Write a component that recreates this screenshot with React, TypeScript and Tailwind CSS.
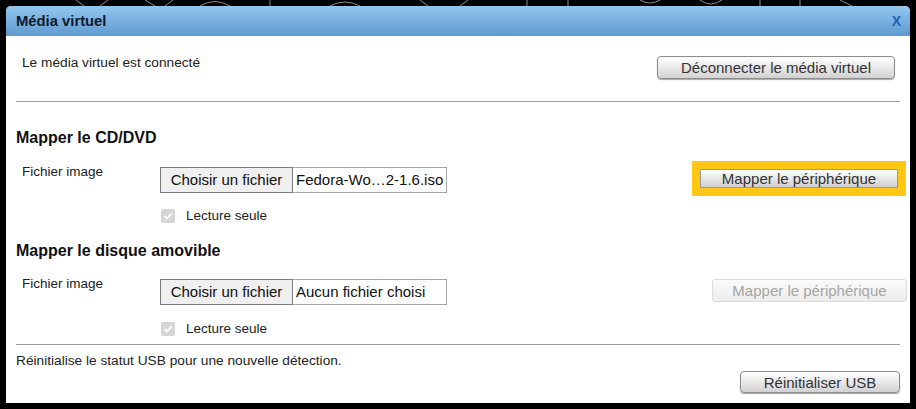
import React from "react";

function Check() {
  return (
    <div className="w-[14px] h-[14px] rounded-[2px] bg-[#d6d6d6] flex items-center justify-center">
      <svg width="10" height="10" viewBox="0 0 10 10">
        <path d="M1.5 5.2 L4 7.6 L8.6 2.4" fill="none" stroke="#ffffff" strokeWidth="1.8" />
      </svg>
    </div>
  );
}

function FileInput({ name }: { name: string }) {
  return (
    <div className="w-[287px] h-[26px] border border-[#a6a6a6] flex items-stretch bg-white">
      <div className="w-[133px] bg-[#efefef] border border-[#7a7a7a] -m-px mr-0 flex items-center justify-center text-[15px] text-[#111]">
        Choisir un fichier
      </div>
      <div className="flex items-center pl-[3px] text-[15px] text-[#111] whitespace-nowrap">{name}</div>
    </div>
  );
}

export default function App() {
  return (
    <div className="w-[916px] h-[409px] bg-black overflow-hidden font-['Liberation_Sans',Arial,sans-serif] text-[#222]">
      <svg width="916" height="6" className="block">
        <g stroke="#8a8a8a" strokeWidth="1" fill="none">
          <path d="M76 0 L84 6" />
          <path d="M100 6 L108 0" />
          <path d="M145 0 L155 6" />
          <path d="M165 6 L173 0" />
          <path d="M200 6 Q215 -3 230 6" />
          <path d="M270 0 L270 6" />
          <path d="M330 6 Q345 -2 360 6" />
          <path d="M420 0 L428 6" />
          <path d="M460 6 L468 0" />
          <path d="M527 0 L527 6" />
          <path d="M568 0 L568 6" />
          <path d="M640 0 Q650 6 660 0" />
          <path d="M700 0 Q710 8 722 0" />
          <path d="M760 0 L760 6" />
          <path d="M800 0 L800 6" />
          <path d="M840 0 L852 6" />
        </g>
      </svg>
      <div className="ml-[6px] w-[904px] h-[397px] rounded-t-[5px] bg-white flex flex-col overflow-hidden">
        <div className="h-[30px] shrink-0 bg-linear-to-b from-[#92c6ee] to-[#5f9ad0] flex items-center justify-between pl-[10px] pr-[9px]">
          <span className="text-[14.8px] font-bold text-[#0d1b2c]">Média virtuel</span>
          <span className="text-[14px] font-bold text-[#1d63b8]">X</span>
        </div>
        <div className="flex-1 pl-[10px] pr-[10px] flex flex-col">
          <div className="flex items-start justify-between pt-[18px]">
            <span className="pl-[6px] text-[13.7px] leading-[17px]">Le média virtuel est connecté</span>
            <button className="mt-[2px] mr-[5px] w-[238px] h-[23px] rounded-[4px] border border-[#8c8c8c] bg-linear-to-b from-white to-[#d2d2d2] shadow-[0_1px_1px_rgba(0,0,0,0.35)] text-[15px] text-[#333]">
              Déconnecter le média virtuel
            </button>
          </div>
          <div className="mt-[22px] h-px bg-[#9c9c9c]" />
          <div className="mt-[26px] text-[16px] leading-[20px] font-bold text-[#111]">Mapper le CD/DVD</div>
          <div className="mt-[19px] flex items-start">
            <span className="w-[144px] pl-[6px] text-[13.5px] leading-[16px] -mt-[3px]">Fichier image</span>
            <FileInput name="Fedora-Wo…2-1.6.iso" />
            <div className="flex-1" />
            <div className="-mt-[6px] -mb-[9px] -mr-[6px] w-[214px] h-[35px] bg-[#fec713] flex items-center justify-center">
              <button className="w-[198px] h-[19px] border border-[#9a9a9a] rounded-[1px] bg-linear-to-b from-white to-[#cfcfcf] text-[15px] leading-[17px] text-[#333]">
                Mapper le périphérique
              </button>
            </div>
          </div>
          <div className="mt-[15px] ml-[145px] flex items-center gap-[11px]">
            <Check />
            <span className="text-[13.5px] leading-[16px]">Lecture seule</span>
          </div>
          <div className="mt-[17px] text-[16px] leading-[20px] font-bold text-[#111]">Mapper le disque amovible</div>
          <div className="mt-[18px] flex items-start">
            <span className="w-[144px] pl-[6px] text-[13.5px] leading-[16px] -mt-[3px]">Fichier image</span>
            <FileInput name="Aucun fichier choisi" />
            <div className="flex-1" />
            <button className="-mr-[7px] w-[195px] h-[23px] rounded-[3px] border border-[#dcdcdc] bg-linear-to-b from-[#fbfbfb] to-[#ececec] text-[15px] text-[#a5a5a5]">
              Mapper le périphérique
            </button>
          </div>
          <div className="mt-[16px] ml-[145px] flex items-center gap-[11px]">
            <Check />
            <span className="text-[13.5px] leading-[16px]">Lecture seule</span>
          </div>
          <div className="mt-[7px] h-px bg-[#9c9c9c]" />
          <div className="mt-[8px] text-[13.7px] leading-[16px]">Réinitialise le statut USB pour une nouvelle détection.</div>
          <div className="mt-[2px] flex justify-end">
            <button className="w-[160px] h-[22px] rounded-[4px] border border-[#8c8c8c] bg-linear-to-b from-white to-[#d2d2d2] shadow-[0_1px_1px_rgba(0,0,0,0.35)] text-[15px] text-[#333]">
              Réinitialiser USB
            </button>
          </div>
        </div>
      </div>
    </div>
  );
}
